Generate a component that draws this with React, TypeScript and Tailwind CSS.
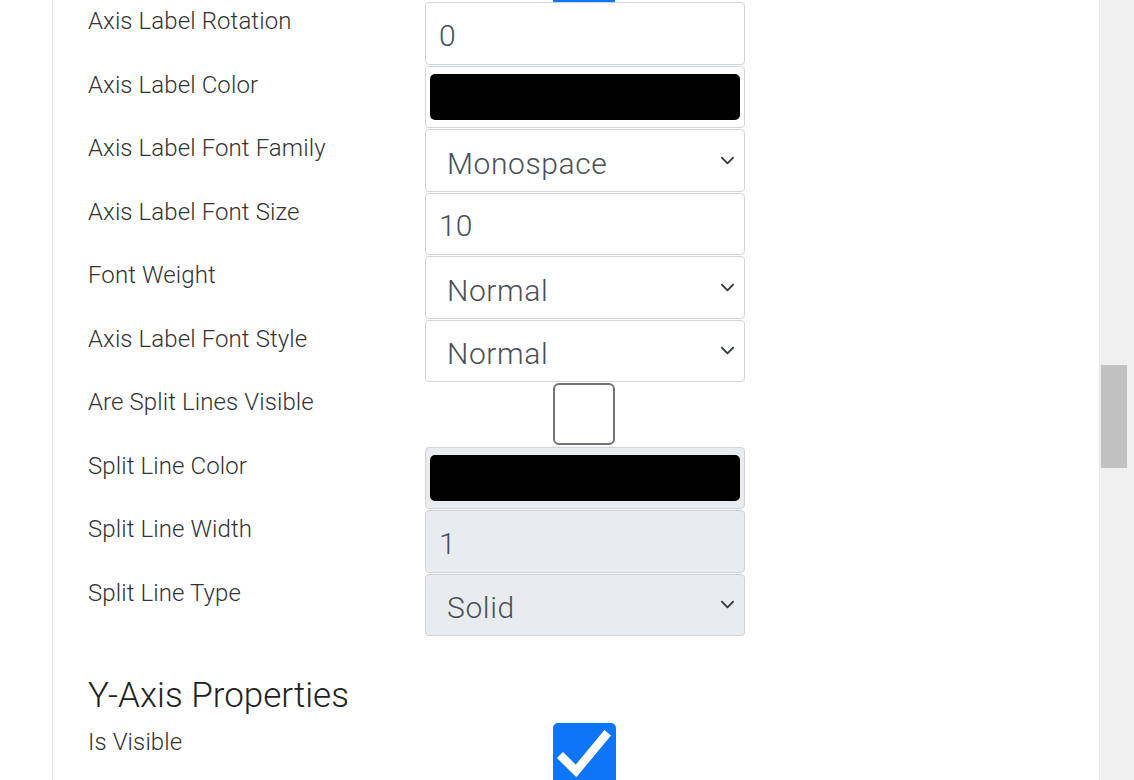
import React from "react";

type Field =
  | { label: string; kind: "text"; value: string; disabled?: boolean }
  | { label: string; kind: "select"; value: string; disabled?: boolean }
  | { label: string; kind: "color"; disabled?: boolean }
  | { label: string; kind: "checkbox"; checked: boolean };

const xAxisFields: Field[] = [
  { label: "Axis Label Rotation", kind: "text", value: "0" },
  { label: "Axis Label Color", kind: "color" },
  { label: "Axis Label Font Family", kind: "select", value: "Monospace" },
  { label: "Axis Label Font Size", kind: "text", value: "10" },
  { label: "Font Weight", kind: "select", value: "Normal" },
  { label: "Axis Label Font Style", kind: "select", value: "Normal" },
  { label: "Are Split Lines Visible", kind: "checkbox", checked: false },
  { label: "Split Line Color", kind: "color", disabled: true },
  { label: "Split Line Width", kind: "text", value: "1", disabled: true },
  { label: "Split Line Type", kind: "select", value: "Solid", disabled: true },
];

const Chevron = () => (
  <svg viewBox="0 0 16 16" className="w-[15px] h-[15px]" fill="none">
    <path d="M2 5l6 6 6-6" stroke="#343a40" strokeWidth="2" strokeLinecap="round" strokeLinejoin="round" />
  </svg>
);

const CheckBox = ({ checked }: { checked: boolean }) =>
  checked ? (
    <div className="w-[63px] h-[63px] rounded-[5px] bg-[#0d76f6]">
      <svg viewBox="0 0 63 63" className="w-[63px] h-[63px]" fill="none">
        <path d="M10 35l13 13 29-35" stroke="white" strokeWidth="8.5" strokeLinecap="square" strokeLinejoin="miter" />
      </svg>
    </div>
  ) : (
    <div className="w-[62px] h-[62px] rounded-[6px] border-2 border-[#747474] bg-white" />
  );

const Control = ({ field }: { field: Field }) => {
  if (field.kind === "checkbox") {
    return (
      <div className="w-[320px] h-[62.5px] pl-[128px]">
        <CheckBox checked={field.checked} />
      </div>
    );
  }

  const box = `w-[320px] h-[62.5px] rounded-[4px] border border-[#ced4da] ${
    field.disabled ? "bg-[#e9ecef]" : "bg-white"
  }`;

  if (field.kind === "color") {
    return (
      <div className={`${box} px-[4px] py-[7px]`}>
        <div className="w-full h-full rounded-[5px] bg-black" />
      </div>
    );
  }

  if (field.kind === "select") {
    return (
      <div className={`${box} flex items-center justify-between pl-[21px] pr-[9px] pt-[6px]`}>
        <span className="text-[30px] font-light text-[#495057] tracking-[0.6px]">{field.value}</span>
        <div className="-mt-[6px]">
          <Chevron />
        </div>
      </div>
    );
  }

  return (
    <div className={`${box} flex items-center pl-[13px] pt-[4px]`}>
      <span className="text-[30px] font-light text-[#495057]">{field.value}</span>
    </div>
  );
};

const Row = ({ field }: { field: Field }) => (
  <div className="flex h-[63.5px]">
    <label className="w-[337px] pt-px text-[24px] font-light leading-[36px] tracking-[0.1px] text-[#333]">
      {field.label}
    </label>
    <Control field={field} />
  </div>
);

export default function App() {
  return (
    <div className="flex h-screen overflow-hidden bg-white font-['Roboto',sans-serif]">
      <div className="flex-1 pl-[52px]">
        <div className="h-full border-l border-[#e3e3e3] pl-[35px]">
          {/* tail of the checkbox from the row above */}
          <div className="flex h-[2px]">
            <div className="w-[337px]" />
            <div className="w-[320px] pl-[128px]">
              <div className="w-[62px] h-[2px] bg-[#0d76f6]" />
            </div>
          </div>

          {xAxisFields.map((f) => (
            <Row key={f.label} field={f} />
          ))}

          <h3 className="mt-[38px] text-[35px] font-light leading-[41px] text-[#222]">Y-Axis Properties</h3>

          <div className="mt-[7px]">
            <Row field={{ label: "Is Visible", kind: "checkbox", checked: true }} />
          </div>
        </div>
      </div>

      {/* scrollbar */}
      <div className="w-[35px] bg-[#f0f0f0] border-l border-[#e8e8e8] pl-[1px] pr-[7px]">
        <div className="mt-[365px] h-[103px] bg-[#c1c1c1]" />
      </div>
    </div>
  );
}
